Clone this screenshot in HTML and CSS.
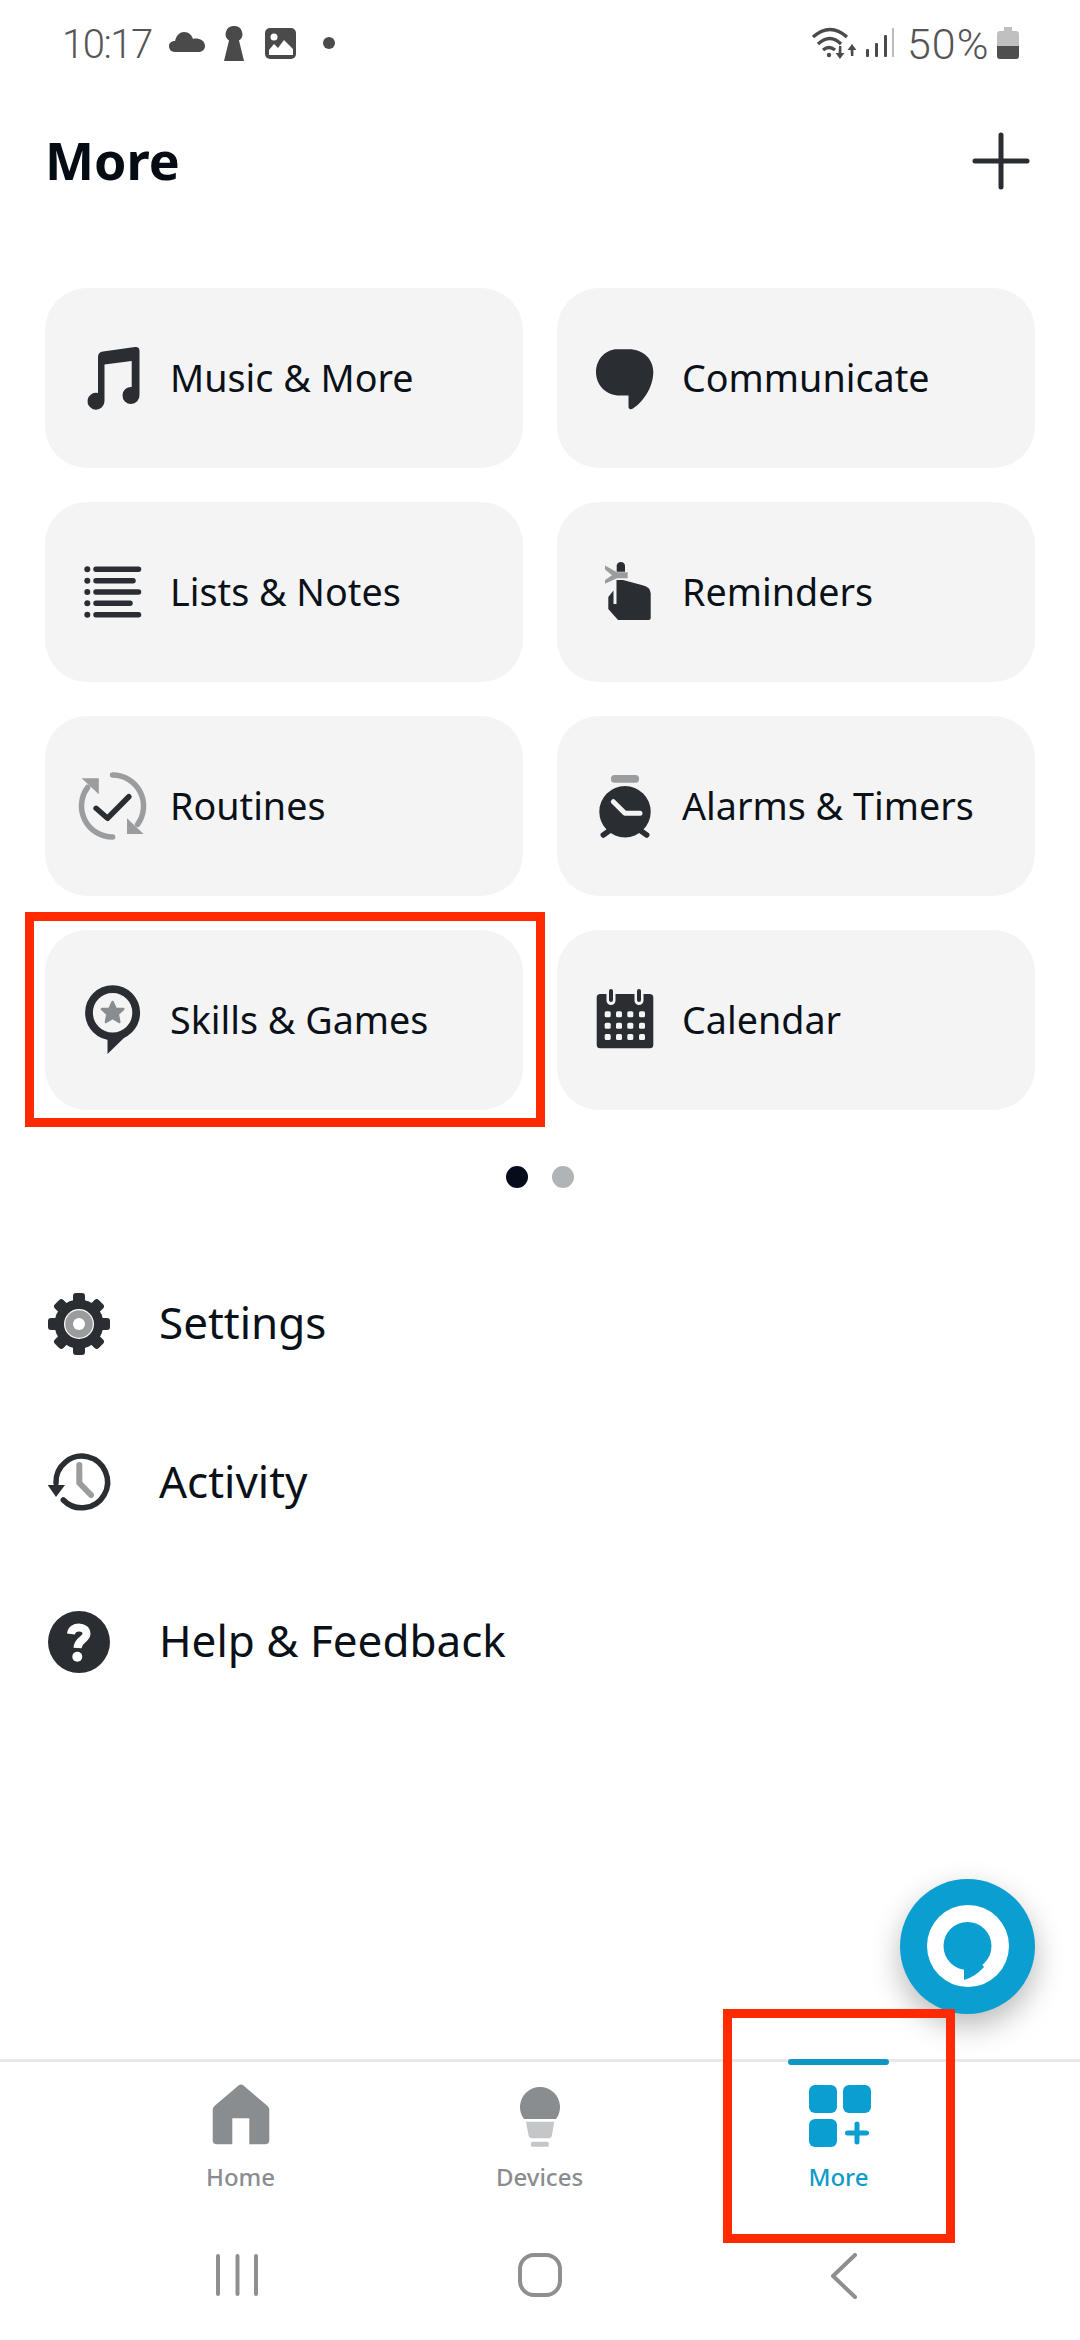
FILE: index.html
```html
<!DOCTYPE html>
<html lang="en">
<head>
	<meta charset="UTF-8">
	<title>More</title>
	<link rel="stylesheet" href="styles.css">
</head>
<body>
	<div class="page">
		<div class="status">
			<span class="status_time">10:17</span>
			<svg class="status_left" width="166" height="36" viewBox="0 0 166 36">
				<path d="M6 26C1 26 0 22 0 20C0 16.5 3 15 6 15C7.5 9 11 6 15 6C20 6 23 9.5 24 13C28 11.5 36 13.5 36 20C36 23.5 33 26 30 26Z"/>
				<path d="M65 0A8 8 0 0 1 70 14.5L75 35H55L60 14.5A8 8 0 0 1 65 0Z"/>
				<rect x="96" y="2" width="31" height="31" rx="5"/>
				<path fill="#fff" d="M100 29V24L105 18L109 22L115 14L124 23V29Z"/>
				<circle cx="105" cy="11" r="3.5" fill="#fff"/>
				<circle cx="160" cy="17" r="6"/>
			</svg>
			<svg class="status_net" width="83" height="36" viewBox="0 0 83 36">
				<g fill="none" stroke="#4a4a4a" stroke-width="3.4">
					<path d="M2 11Q19 -4 36 11"/>
					<path d="M7 18Q19 7 30 18"/>
					<path d="M12 24Q18 19 24 24"/>
				</g>
				<circle cx="18" cy="29" r="2.2"/>
				<path d="M28 20h2.4v7h3L29 33l-4.4-6h3ZM40 30h2.4v-6h3L41 18l-4.4 6h3Z"/>
				<rect x="55" y="23" width="3" height="8" rx="1"/>
				<rect x="64" y="17" width="3" height="14" rx="1"/>
				<rect x="73" y="9" width="3" height="22" rx="1"/>
				<rect class="status_off" x="81" y="2" width="2.5" height="29" rx="1"/>
			</svg>
			<span class="status_pct">50%</span>
			<svg class="status_batt" width="22" height="33" viewBox="0 0 22 33">
				<path fill="#c0c0c0" d="M7 0h8v4h4q3 0 3 3v12H0V7q0-3 3-3h4Z"/>
				<path fill="#4f4f4f" d="M0 19h22v10q0 3-3 3H3q-3 0-3-3Z"/>
			</svg>
		</div>

		<div class="head">
			<h1 class="head_title">More</h1>
			<svg class="head_add" width="58" height="58" viewBox="0 0 58 58">
				<path d="M29 3V55M3 29H55" stroke="#2a2e33" stroke-width="5" stroke-linecap="round"/>
			</svg>
		</div>

		<div class="tiles">
			<div class="tile">
				<svg class="tile_icon" viewBox="0 0 76 76"><path d="M28 11.5L60 7Q64.5 6.5 64.5 11V55A8.5 8.5 0 1 1 56.7 47V21L29.5 24.5V61A8.5 8.5 0 1 1 23 53V17Q23 12 28 11.5Z"/></svg>
				<span>Music &amp; More</span>
			</div>
			<div class="tile">
				<svg class="tile_icon" viewBox="0 0 76 76"><path d="M30 9.3H42C56 9.3 66.3 19 66.3 32C66.3 48 55 63 46 68.5C43.5 70 41 69 41.5 66L41.5 55.5Q38 55.5 33 55.5C19 55.5 9 45 9 32C9 19 19 9.3 30 9.3Z"/></svg>
				<span>Communicate</span>
			</div>
			<div class="tile">
				<svg class="tile_icon" viewBox="0 0 76 76">
					<g class="ic_lines">
						<path d="M21 15.3H63.5M21 26.7H58M21 38H63.5M21 49.3H55M21 60.7H63.5"/>
					</g>
					<circle cx="12.3" cy="15.3" r="3"/><circle cx="12.3" cy="26.7" r="3"/><circle cx="12.3" cy="38" r="3"/><circle cx="12.3" cy="49.3" r="3"/><circle cx="12.3" cy="60.7" r="3"/>
				</svg>
				<span>Lists &amp; Notes</span>
			</div>
			<div class="tile">
				<svg class="tile_icon" viewBox="0 0 76 76">
					<path d="M29.7 17.7V11.5A4.2 4.2 0 0 1 38 11.5V17.7Z"/>
					<path class="ic_soft" d="M18 11.5L30 18.3H40.7V24.3H30L18 29.7V26L25 21.3L18 15.5Z"/>
					<path d="M29.5 26H36L54.7 31Q63.7 33 63.7 39.3V64Q63.7 66 61.7 66H31L21.3 55V43L26.5 36.5V50H29.5Z"/>
				</svg>
				<span>Reminders</span>
			</div>
			<div class="tile">
				<svg class="tile_icon" viewBox="0 0 76 76">
					<g class="ic_soft_line">
						<path d="M37.6 7A31 31 0 0 1 62.6 56.3"/>
						<path d="M37.6 69A31 31 0 0 1 12.6 19.5"/>
					</g>
					<path class="ic_soft" d="M6.6 10.3H23.8V26.3ZM52 50.3V66H68.6Z"/>
					<path class="ic_check" d="M21.1 40.3L32.5 50.3L53.8 28.7"/>
				</svg>
				<span>Routines</span>
			</div>
			<div class="tile">
				<svg class="tile_icon" viewBox="0 0 76 76">
					<rect class="ic_soft" x="24" y="7" width="28" height="7.7" rx="3.5"/>
					<circle cx="38" cy="43.7" r="25.7"/>
					<path class="ic_dark_line" d="M16.3 67L24.7 61M59.7 67L51.3 61"/>
					<path class="ic_hands" d="M26.3 33.7L38 45.3H53"/>
				</svg>
				<span>Alarms &amp; Timers</span>
			</div>
			<div class="tile tile_marked">
				<svg class="tile_icon" viewBox="0 0 76 76">
					<circle class="ic_ring" cx="37.6" cy="30.7" r="23.6"/>
					<path d="M32.5 54V72L53 52Z"/>
					<path class="ic_star" d="M37.6 20L40.8 27H48.3L42.8 32.2L44.3 40L37.6 36L30.9 40L32.4 32.2L26.9 27H34.4Z"/>
				</svg>
				<span>Skills &amp; Games</span>
				<div class="mark mark_tile"></div>
			</div>
			<div class="tile">
				<svg class="tile_icon" viewBox="0 0 76 76">
					<rect x="9.7" y="12" width="56.6" height="54.3" rx="3.5"/>
					<g class="ic_tile_fill">
						<rect x="19.5" y="8" width="9" height="15" rx="4.5"/>
						<rect x="47.5" y="8" width="9" height="15" rx="4.5"/>
						<rect x="17.7" y="29.3" width="6" height="6" rx="1.5"/><rect x="29" y="29.3" width="6" height="6" rx="1.5"/><rect x="40.3" y="29.3" width="6" height="6" rx="1.5"/><rect x="52" y="29.3" width="6" height="6" rx="1.5"/>
						<rect x="17.7" y="40.7" width="6" height="6" rx="1.5"/><rect x="29" y="40.7" width="6" height="6" rx="1.5"/><rect x="40.3" y="40.7" width="6" height="6" rx="1.5"/><rect x="52" y="40.7" width="6" height="6" rx="1.5"/>
						<rect x="17.7" y="52" width="6" height="6" rx="1.5"/><rect x="29" y="52" width="6" height="6" rx="1.5"/><rect x="40.3" y="52" width="6" height="6" rx="1.5"/><rect x="52" y="52" width="6" height="6" rx="1.5"/>
					</g>
					<rect x="22" y="7" width="4" height="13" rx="2"/>
					<rect x="50" y="7" width="4" height="13" rx="2"/>
				</svg>
				<span>Calendar</span>
			</div>
		</div>

		<div class="dots">
			<span class="dot dot_on"></span>
			<span class="dot"></span>
		</div>

		<div class="list">
			<div class="row">
				<svg class="row_icon" viewBox="0 0 62 62">
					<circle cx="31" cy="31" r="24.5"/>
					<rect x="25" y="0" width="12" height="16" rx="3"/>
					<rect x="25" y="0" width="12" height="16" rx="3" transform="rotate(45 31 31)"/>
					<rect x="25" y="0" width="12" height="16" rx="3" transform="rotate(90 31 31)"/>
					<rect x="25" y="0" width="12" height="16" rx="3" transform="rotate(135 31 31)"/>
					<rect x="25" y="0" width="12" height="16" rx="3" transform="rotate(180 31 31)"/>
					<rect x="25" y="0" width="12" height="16" rx="3" transform="rotate(225 31 31)"/>
					<rect x="25" y="0" width="12" height="16" rx="3" transform="rotate(270 31 31)"/>
					<rect x="25" y="0" width="12" height="16" rx="3" transform="rotate(315 31 31)"/>
					<circle cx="31" cy="31" r="15" fill="#fff"/>
					<circle cx="31" cy="31" r="13.8" fill="#9a9c9e"/>
					<circle cx="31" cy="31" r="6" fill="#fff"/>
				</svg>
				<span>Settings</span>
			</div>
			<div class="row">
				<svg class="row_icon" viewBox="0 0 62 62">
					<path class="ic_outline" d="M8 31A25.8 25.8 0 1 1 15.3 48"/>
					<path d="M-0.3 33H17L8 45Z"/>
					<path class="ic_clock" d="M31.3 13V31L43 43"/>
				</svg>
				<span>Activity</span>
			</div>
			<div class="row">
				<svg class="row_icon" viewBox="0 0 62 62">
					<circle cx="31" cy="31" r="31"/>
					<path class="ic_help" d="M23 23C23.5 18.5 27 16.5 31 16.5C35 16.5 38.5 19 38.5 22.8C38.5 28.5 30 28.5 29.5 37"/>
					<circle cx="29.3" cy="45.7" r="5" fill="#fff"/>
				</svg>
				<span>Help &amp; Feedback</span>
			</div>
		</div>

		<div class="fab">
			<svg width="135" height="135" viewBox="0 0 135 135">
				<circle cx="68" cy="67" r="41" fill="#fff"/>
				<circle cx="67.5" cy="67" r="24" fill="#0b9fd1"/>
				<path fill="#0b9fd1" d="M64 85V101Q75 98 84 88L78 80Z"/>
			</svg>
		</div>

		<div class="nav">
			<div class="nav_item">
				<svg class="nav_icon" viewBox="0 0 64 66"><path d="M29.5 3.5Q32 1.5 34.5 3.5L58 23.5Q60.3 25.5 60.3 28V58Q60.3 62.3 56 62.3H40.3V36.3H23.3V62.3H8Q3.7 62.3 3.7 58V28Q3.7 25.5 6 23.5Z"/></svg>
				<span class="nav_label">Home</span>
			</div>
			<div class="nav_item">
				<svg class="nav_icon" viewBox="0 0 64 66">
					<path d="M16 37A20 20 0 1 1 48 37Z"/>
					<path fill="#c4c6c8" d="M18 39.7H46.3L44 53Q43.5 56.3 40 56.3H24.5Q21 56.3 20.5 53Z"/>
					<rect x="23" y="59.7" width="17.7" height="5" rx="1.5" fill="#c4c6c8"/>
				</svg>
				<span class="nav_label">Devices</span>
			</div>
			<div class="nav_item nav_item_on">
				<div class="nav_bar"></div>
				<svg class="nav_icon" viewBox="0 0 64 66">
					<rect x="2" y="3" width="28" height="28" rx="6"/>
					<rect x="36" y="3" width="28" height="28" rx="6"/>
					<rect x="2" y="37" width="28" height="28" rx="6"/>
					<path class="ic_plus" d="M50 42V60M40.5 51H59.5"/>
				</svg>
				<span class="nav_label">More</span>
				<div class="mark mark_nav"></div>
			</div>
		</div>

		<div class="sys">
			<svg class="sys_bars" width="42" height="44" viewBox="0 0 42 44">
				<path d="M2 3V41M21.5 3V41M40 3V41"/>
			</svg>
			<svg class="sys_home" width="44" height="44" viewBox="0 0 44 44">
				<rect x="2" y="2" width="40" height="40" rx="14"/>
			</svg>
			<svg class="sys_back" width="26" height="46" viewBox="0 0 26 46">
				<path d="M24 2L2 23L24 44"/>
			</svg>
		</div>
	</div>
</body>
</html>
```

FILE: styles.css
```css
*{
	margin: 0;
	padding: 0;
	box-sizing: border-box;
}
body{
	background-color: #fff;
	font-family: "Noto Sans", "Liberation Sans", sans-serif;
	color: #0a1118;
}
svg{
	display: block;
	flex: none;
}
.page{
	width: 1080px;
	height: 2340px;
	position: relative;
	display: flex;
	flex-direction: column;
	overflow: hidden;
}

/* status bar */
.status{
	height: 88px;
	display: flex;
	align-items: center;
	padding: 0 61px 0 62px;
	color: #555;
	font-family: Roboto, sans-serif;
	font-weight: 300;
	font-size: 40px;
}
.status_time{
	width: 107px;
	letter-spacing: -1.5px;
}
.status_left{
	fill: #4a4a4a;
}
.status_net{
	fill: #4a4a4a;
	margin-left: auto;
}
.status_off{
	fill: #bbb;
}
.status_pct{
	margin-left: 13px;
	width: 90px;
	font-size: 43px;
	letter-spacing: 1px;
}
.status_batt{
	margin-top: -1px;
}

/* title */
.head{
	height: 146px;
	display: flex;
	align-items: center;
	justify-content: space-between;
	padding: 0 50px 0 45px;
}
.head_title{
	margin-top: -3px;
	font-size: 52px;
	font-weight: 700;
	color: #050c13;
}

/* tiles */
.tiles{
	margin-top: 54px;
	padding: 0 45px;
	display: grid;
	grid-template-columns: 478px 478px;
	grid-auto-rows: 180px;
	gap: 34px;
}
.tile{
	position: relative;
	background-color: #f4f4f5;
	border-radius: 42px;
	display: flex;
	align-items: center;
	gap: 19px;
	padding-left: 30px;
	font-size: 37.7px;
}
.tile span{
	margin-top: -2px;
}
.tile_icon{
	width: 76px;
	height: 76px;
	fill: #2a2e33;
}
.ic_lines path{
	fill: none;
	stroke: #2a2e33;
	stroke-width: 5.5;
	stroke-linecap: round;
}
.ic_soft{
	fill: #9a9c9e;
}
.ic_soft_line path{
	fill: none;
	stroke: #9a9c9e;
	stroke-width: 5.5;
	stroke-linecap: round;
}
.ic_check{
	fill: none;
	stroke: #2a2e33;
	stroke-width: 5.5;
	stroke-linecap: round;
	stroke-linejoin: round;
}
.ic_dark_line{
	fill: none;
	stroke: #2a2e33;
	stroke-width: 5.5;
	stroke-linecap: round;
}
.ic_hands{
	fill: none;
	stroke: #f4f4f5;
	stroke-width: 5;
	stroke-linecap: round;
	stroke-linejoin: round;
}
.ic_ring{
	fill: none;
	stroke: #2a2e33;
	stroke-width: 7.8;
}
.ic_star{
	fill: #8a8d8f;
	stroke: #8a8d8f;
	stroke-width: 2.5;
	stroke-linejoin: round;
}
.ic_tile_fill{
	fill: #f4f4f5;
}

/* red highlight boxes */
.mark{
	position: absolute;
	border: 9px solid #ff2a00;
}
.mark_tile{
	left: -20px;
	right: -22px;
	top: -18px;
	bottom: -17px;
}
.mark_nav{
	left: 34px;
	width: 232px;
	top: -53px;
	height: 234px;
}

/* pager */
.dots{
	margin: 56px 0;
	height: 22px;
	display: flex;
	justify-content: center;
	gap: 24px;
}
.dot{
	width: 22px;
	height: 22px;
	border-radius: 50%;
	background-color: #b1b4b6;
}
.dot_on{
	background-color: #050c1c;
}

/* list */
.list{
	padding: 0 48px;
}
.row{
	height: 159px;
	display: flex;
	align-items: center;
	gap: 49px;
	font-size: 44px;
}
.row span{
	margin-top: -3px;
}
.row_icon{
	width: 62px;
	height: 62px;
	fill: #2a2e33;
	overflow: visible;
}
.ic_outline{
	fill: none;
	stroke: #2a2e33;
	stroke-width: 5.5;
	stroke-linecap: round;
}
.ic_clock{
	fill: none;
	stroke: #9a9c9e;
	stroke-width: 6;
	stroke-linecap: round;
	stroke-linejoin: round;
}
.ic_help{
	fill: none;
	stroke: #fff;
	stroke-width: 8;
}

/* alexa button */
.fab{
	position: absolute;
	left: 900px;
	top: 1879px;
	width: 135px;
	height: 135px;
	border-radius: 50%;
	background-color: #0b9fd1;
	box-shadow: 0 12px 30px rgba(0,0,0,0.28);
}

/* bottom tabs */
.nav{
	margin-top: auto;
	height: 181px;
	border-top: 3px solid #e8e8e8;
	padding: 0 91px;
	display: grid;
	grid-template-columns: repeat(3, 299px);
}
.nav_item{
	position: relative;
	display: flex;
	flex-direction: column;
	align-items: center;
	padding-top: 20px;
	color: #8a8d8f;
}
.nav_icon{
	width: 64px;
	height: 66px;
	fill: #8a8d8f;
}
.nav_label{
	margin-top: 12px;
	font-size: 24px;
	line-height: 34px;
	font-weight: 500;
}
.nav_item_on{
	color: #0e9bc9;
}
.nav_item_on .nav_icon{
	fill: #0b9fd1;
}
.nav_bar{
	position: absolute;
	top: -3px;
	width: 101px;
	height: 6px;
	border-radius: 3px;
	background-color: #0e96c2;
}
.ic_plus{
	fill: none;
	stroke: #0b9fd1;
	stroke-width: 5;
	stroke-linecap: round;
}

/* android buttons */
.sys{
	height: 100px;
	display: flex;
	align-items: flex-start;
	padding: 13px 0 0 216px;
}
.sys path,
.sys rect{
	fill: none;
	stroke: #8f8f8f;
	stroke-width: 4;
	stroke-linecap: round;
	stroke-linejoin: round;
}
.sys_home{
	margin-left: 260px;
}
.sys_back{
	margin-left: 269px;
}
```
